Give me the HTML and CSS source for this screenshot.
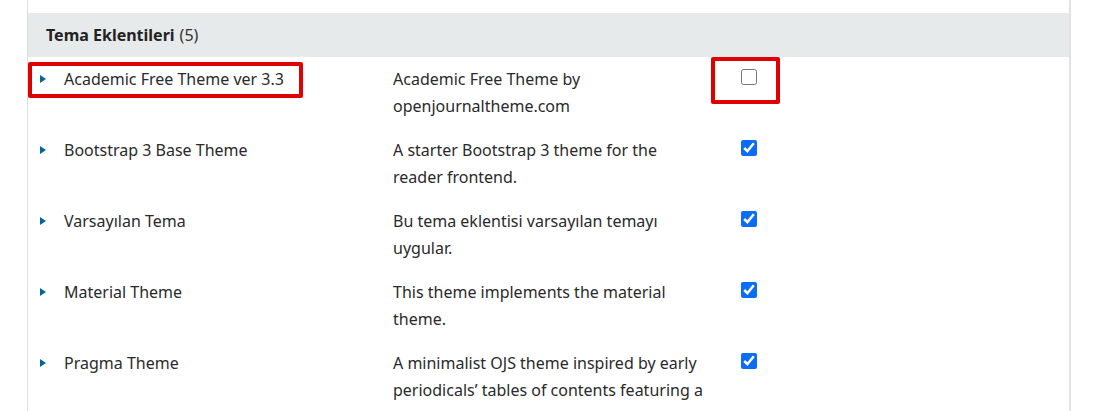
FILE: index.html
```html
<!DOCTYPE html>
<html lang="tr">
<head>
<meta charset="utf-8">
<link rel="stylesheet" href="styles.css">
</head>
<body>
<div class="panel">
  <div class="grid-header"><span class="title">Tema Eklentileri</span> <span class="count">(5)</span></div>
  <div class="rows">
    <div class="row">
      <div class="name"><span class="caret"></span>Academic Free Theme ver 3.3</div>
      <div class="desc">Academic Free Theme by openjournaltheme.com</div>
      <div class="check"><input type="checkbox"></div>
      <div class="mark mark-name"></div>
      <div class="mark mark-check"></div>
    </div>
    <div class="row">
      <div class="name"><span class="caret"></span>Bootstrap 3 Base Theme</div>
      <div class="desc">A starter Bootstrap 3 theme for the reader frontend.</div>
      <div class="check"><input type="checkbox" checked></div>
    </div>
    <div class="row">
      <div class="name"><span class="caret"></span>Varsayılan Tema</div>
      <div class="desc">Bu tema eklentisi varsayılan temayı uygular.</div>
      <div class="check"><input type="checkbox" checked></div>
    </div>
    <div class="row">
      <div class="name"><span class="caret"></span>Material Theme</div>
      <div class="desc">This theme implements the material theme.</div>
      <div class="check"><input type="checkbox" checked></div>
    </div>
    <div class="row">
      <div class="name"><span class="caret"></span>Pragma Theme</div>
      <div class="desc">A minimalist OJS theme inspired by early periodicals’ tables of contents featuring a bold use of space and typography.</div>
      <div class="check"><input type="checkbox" checked></div>
    </div>
  </div>
</div>
</body>
</html>
```
FILE: styles.css
```css
html, body {
  margin: 0;
  padding: 0;
  background: #fff;
  overflow: hidden;
}
body {
  font-family: "Noto Sans", "Open Sans", sans-serif;
  color: #2a2a2a;
  font-size: 16px;
}
.panel {
  margin-left: 27px;
  width: 1041px;
  min-height: 411px;
  border-left: 1px solid #dddddd;
  border-right: 2px solid #e2e2e2;
  padding-top: 13px;
  box-sizing: content-box;
}
.grid-header {
  background: #e7eaeb;
  height: 44px;
  display: flex;
  align-items: center;
  padding-left: 18px;
  font-size: 16px;
  color: #222;
}
.title {
  font-weight: 700;
  margin-right: 5px;
}
.count {
  color: #333;
}
.row {
  position: relative;
  display: grid;
  grid-template-columns: 365px 347px 1fr;
  padding: 9px 0 8px;
  line-height: 27px;
}
.name {
  display: flex;
  align-items: flex-start;
  padding-left: 12px;
}
.caret {
  flex: none;
  width: 0;
  height: 0;
  border-top: 4px solid transparent;
  border-bottom: 4px solid transparent;
  border-left: 6px solid #006798;
  margin-right: 18px;
  margin-top: 9px;
}
.desc {
  padding-right: 35px;
}
.check {
  padding-left: 1px;
}
.check input {
  width: 16px;
  height: 16px;
  margin: 3px 0 0;
  accent-color: #0b6cf7;
}
.mark {
  position: absolute;
  border: 4px solid #e00000;
  border-radius: 2px;
  box-sizing: border-box;
}
.mark-name {
  left: 0;
  top: 5px;
  width: 275px;
  height: 36px;
}
.mark-check {
  left: 683px;
  top: 0;
  width: 69px;
  height: 47px;
}
```
